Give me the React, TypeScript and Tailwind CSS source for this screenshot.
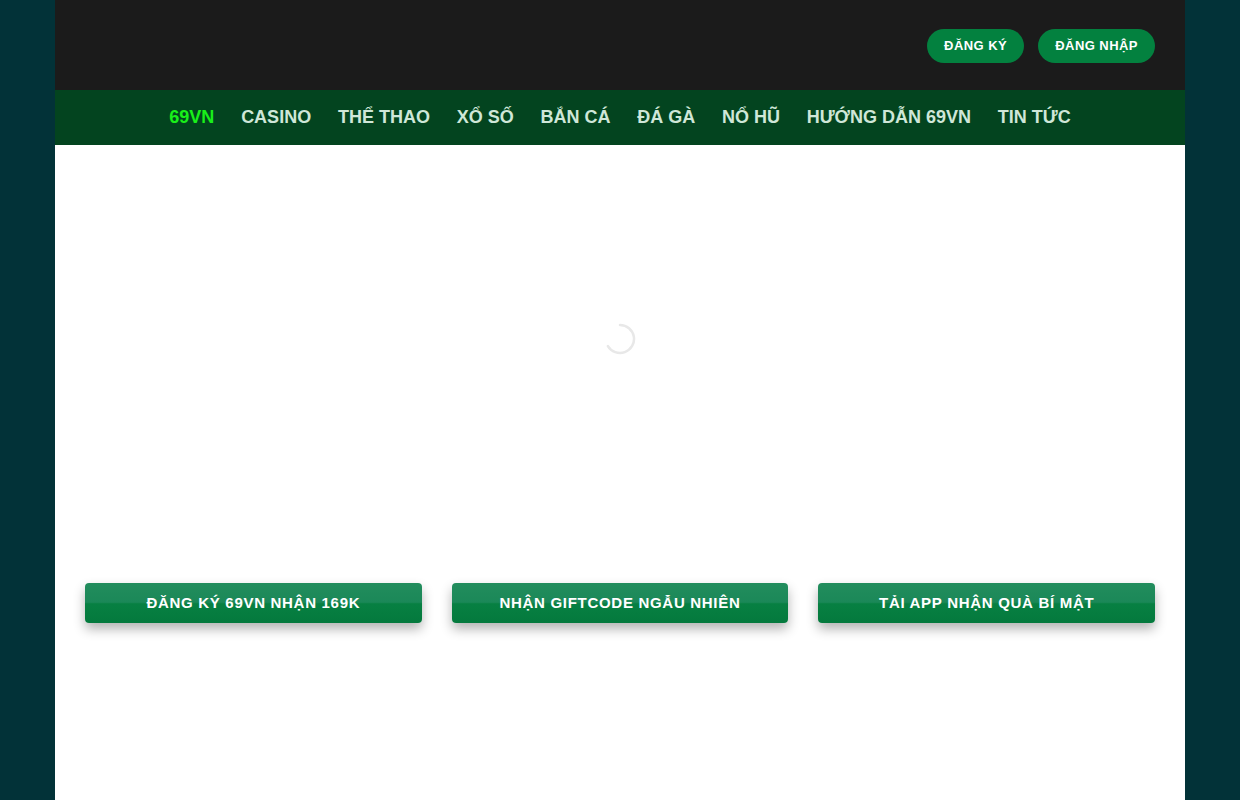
import { useState } from "react";

const navItems = [
  "69VN",
  "CASINO",
  "THỂ THAO",
  "XỔ SỐ",
  "BẮN CÁ",
  "ĐÁ GÀ",
  "NỔ HŨ",
  "HƯỚNG DẪN 69VN",
  "TIN TỨC",
];

const ctaButtons = [
  "ĐĂNG KÝ 69VN NHẬN 169K",
  "NHẬN GIFTCODE NGẪU NHIÊN",
  "TẢI APP NHẬN QUÀ BÍ MẬT",
];

function Spinner() {
  return (
    <svg width="32" height="32" viewBox="0 0 32 32" fill="none">
      <path
        d="M16 2 A14 14 0 1 1 3.9 23"
        stroke="#e8e8e8"
        strokeWidth="2.5"
        strokeLinecap="round"
      />
    </svg>
  );
}

export default function App() {
  const [active] = useState<string>("69VN");

  return (
    <div
      className="min-h-[800px] bg-[#023238]"
      style={{ fontFamily: '"Liberation Sans", Arial, sans-serif' }}
    >
      <div className="mx-auto w-[1130px] min-h-[800px] bg-white">
        <header className="h-[90px] bg-[#1b1b1b] flex items-center justify-end gap-[14px] px-[30px] pt-[1px]">
          <button className="h-[34px] px-[17px] rounded-full bg-[#03813f] text-white text-[13px] font-bold tracking-[0.45px]">
            ĐĂNG KÝ
          </button>
          <button className="h-[34px] px-[17px] rounded-full bg-[#03813f] text-white text-[13px] font-bold tracking-[0.45px]">
            ĐĂNG NHẬP
          </button>
        </header>

        <nav className="h-[55px] bg-[#03441f] flex items-center justify-center gap-[26.75px]">
          {navItems.map((item) => (
            <a
              key={item}
              className={
                item === active
                  ? "text-[18px] font-bold text-[#19f019]"
                  : "text-[18px] font-bold text-[#cfe7d8]"
              }
            >
              {item}
            </a>
          ))}
        </nav>

        <main className="px-[30px]">
          <div className="h-[388px] flex items-center justify-center">
            <Spinner />
          </div>

          <div className="mt-[50px] grid grid-cols-3 gap-[30px]">
            {ctaButtons.map((label) => (
              <button
                key={label}
                className="h-[40px] rounded-[4px] bg-[linear-gradient(180deg,#228d5d_0%,#1b8858_48%,#078042_52%,#04793d_100%)] text-white text-[15px] font-bold tracking-[0.7px] shadow-[0_6px_12px_rgba(0,0,0,0.3)]"
              >
                {label}
              </button>
            ))}
          </div>
        </main>
      </div>
    </div>
  );
}
